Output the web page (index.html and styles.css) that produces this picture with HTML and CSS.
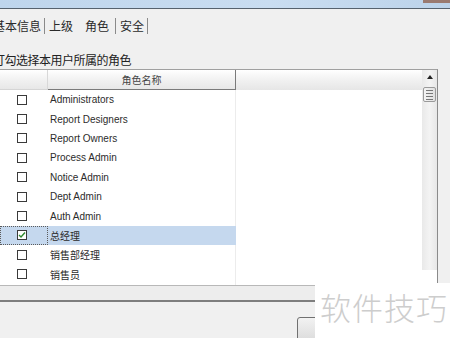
FILE: index.html
```html
<!DOCTYPE html>
<html lang="zh-CN">
<head>
    <meta charset="UTF-8">
    <title>用户 - 编辑</title>
    <link rel="stylesheet" href="styles.css">
</head>
<body>
<div class="titlebar">
    <span class="title">用户 - 编辑</span>
    <span class="close"></span>
</div>

<div class="tabs">
    <span class="tab first">基本信息</span>
    <span class="sep"></span>
    <span class="tab">上级</span>
    <span class="tab active">角色</span>
    <span class="sep"></span>
    <span class="tab">安全</span>
    <span class="sep"></span>
</div>

<div class="hint">打勾选择本用户所属的角色</div>

<div class="grid">
    <div class="rows">
        <div class="row head">
            <div class="cell check"></div>
            <div class="cell name">角色名称</div>
        </div>
        <div class="row"><div class="cell check"><span class="box"></span></div><div class="cell name">Administrators</div></div>
        <div class="row"><div class="cell check"><span class="box"></span></div><div class="cell name">Report Designers</div></div>
        <div class="row"><div class="cell check"><span class="box"></span></div><div class="cell name">Report Owners</div></div>
        <div class="row"><div class="cell check"><span class="box"></span></div><div class="cell name">Process Admin</div></div>
        <div class="row"><div class="cell check"><span class="box"></span></div><div class="cell name">Notice Admin</div></div>
        <div class="row"><div class="cell check"><span class="box"></span></div><div class="cell name">Dept Admin</div></div>
        <div class="row"><div class="cell check"><span class="box"></span></div><div class="cell name">Auth Admin</div></div>
        <div class="row selected">
            <div class="cell check focus">
                <span class="box">
                    <svg width="8" height="8" viewBox="0 0 8 8"><polyline points="1,4 3,6 7,1.5" fill="none" stroke="#2f8a2f" stroke-width="1.4"/></svg>
                </span>
            </div>
            <div class="cell name">总经理</div>
        </div>
        <div class="row"><div class="cell check"><span class="box"></span></div><div class="cell name">销售部经理</div></div>
        <div class="row"><div class="cell check"><span class="box"></span></div><div class="cell name">销售员</div></div>
    </div>
    <div class="scrollbar">
        <span class="arrow"></span>
        <span class="thumb"><i></i><i></i><i></i><i></i></span>
    </div>
</div>

<div class="strip"></div>

<div class="bottom">
    <span class="button"></span>
</div>

<div class="watermark">软件技巧</div>
</body>
</html>
```

FILE: styles.css
```css
:root {
    --bg: #f0f0f0;
    --text: #222;
    --grid-line: #a0a0a0;
    --selected: #c5d8ee;
}

* {
    box-sizing: border-box;
}

body {
    margin: 0;
    width: 450px;
    height: 338px;
    overflow: hidden;
    background-color: var(--bg);
    color: var(--text);
    font-family: "Noto Sans CJK SC", sans-serif;
    position: relative;
}

.titlebar {
    height: 9px;
    overflow: hidden;
    background: linear-gradient(90deg, #bed5ec, #c9ddf1 60%, #bcd3ea);
    border-bottom: 1px solid #56626e;
    display: flex;
    justify-content: space-between;
}

.title {
    display: block;
    margin-top: -12px;
    margin-left: 2px;
    font-size: 12px;
    line-height: 12px;
    color: #444;
}

.close {
    width: 27px;
    height: 3px;
    background: #9a7a70;
}

.tabs {
    display: flex;
    align-items: center;
    margin: 9px 0 0 -11px;
    height: 16px;
    font-size: 12px;
    line-height: 16px;
    color: #2a2a2a;
}

.tab {
    padding: 0 3px 0 4px;
}

.tab.active {
    padding: 0 6px 0 9px;
}

.sep {
    width: 1px;
    height: 16px;
    background: #8a8a8a;
}

.hint {
    margin: 18px 0 0 -7px;
    font-size: 12px;
    line-height: 16px;
    letter-spacing: -0.5px;
}

.grid {
    display: flex;
    width: 438px;
    height: 216px;
    margin-top: 1px;
    border-top: 1px solid var(--grid-line);
    border-right: 1px solid #8a8a8a;
    background: #fff;
}

.rows {
    width: 422px;
    background: linear-gradient(90deg, #fff 235px, #ececec 235px, #ececec 236px, #fff 236px);
}

.row {
    display: flex;
    height: 19.4px;
    align-items: stretch;
    font-size: 10px;
    color: #2c2c2c;
}

.cell {
    display: flex;
    align-items: center;
}

.cell.check {
    width: 48px;
    padding-left: 17px;
}

.cell.name {
    width: 188px;
    padding-left: 2px;
    font-family: "Liberation Sans", "Noto Sans CJK SC", sans-serif;
}

.row.head {
    height: 20px;
    background: linear-gradient(#ffffff, #f1f1f1 50%, #e6e6e6);
}

.row.head .cell.check {
    border-right: 1px solid #d8d8d8;
    border-bottom: 1px solid #d5d5d5;
}

.row.head .cell.name {
    justify-content: center;
    padding-left: 0;
    border-right: 1px solid #7a7a7a;
    border-bottom: 1px solid #7a7a7a;
    font-family: "Noto Sans CJK SC", sans-serif;
    color: #444;
}

.row.selected .cell {
    background: var(--selected);
}

.cell.focus {
    border: 1px dotted #5a5a5a;
    padding-left: 16px;
}

.box {
    display: flex;
    align-items: center;
    justify-content: center;
    width: 10px;
    height: 10px;
    border: 1px solid #3a3a3a;
    background: #fff;
}

.scrollbar {
    width: 15px;
    height: 200px;
    background: linear-gradient(90deg, #e9e9e9, #f3f3f3 50%, #e7e7e7);
    display: flex;
    flex-direction: column;
    align-items: center;
}

.arrow {
    margin-top: 5px;
    width: 0;
    height: 0;
    border-left: 3px solid transparent;
    border-right: 3px solid transparent;
    border-bottom: 4px solid #222;
}

.thumb {
    margin-top: 8px;
    width: 13px;
    height: 15px;
    border: 1px solid #9a9a9a;
    border-radius: 2px;
    background: linear-gradient(90deg, #f4f4f4, #e0e0e0);
    display: flex;
    flex-direction: column;
    align-items: center;
    justify-content: center;
    gap: 2px;
}

.thumb i {
    width: 7px;
    height: 1px;
    background: #777;
}

.strip {
    height: 17px;
    border-top: 1px solid #b8b8b8;
    border-bottom: 2px solid #7e7e7e;
    background: #ededed;
}

.bottom {
    padding: 15px 0 0 297px;
}

.button {
    display: block;
    width: 70px;
    height: 24px;
    border: 1px solid #707070;
    border-radius: 3px;
    background: linear-gradient(#f2f2f2, #dcdcdc);
}

.watermark {
    position: absolute;
    left: 315px;
    top: 283px;
    width: 135px;
    height: 55px;
    padding: 2px 0 0 5px;
    background: #fff;
    color: #cdcdcd;
    font-size: 31px;
    font-weight: 300;
    line-height: 44px;
    letter-spacing: 1px;
}
```
